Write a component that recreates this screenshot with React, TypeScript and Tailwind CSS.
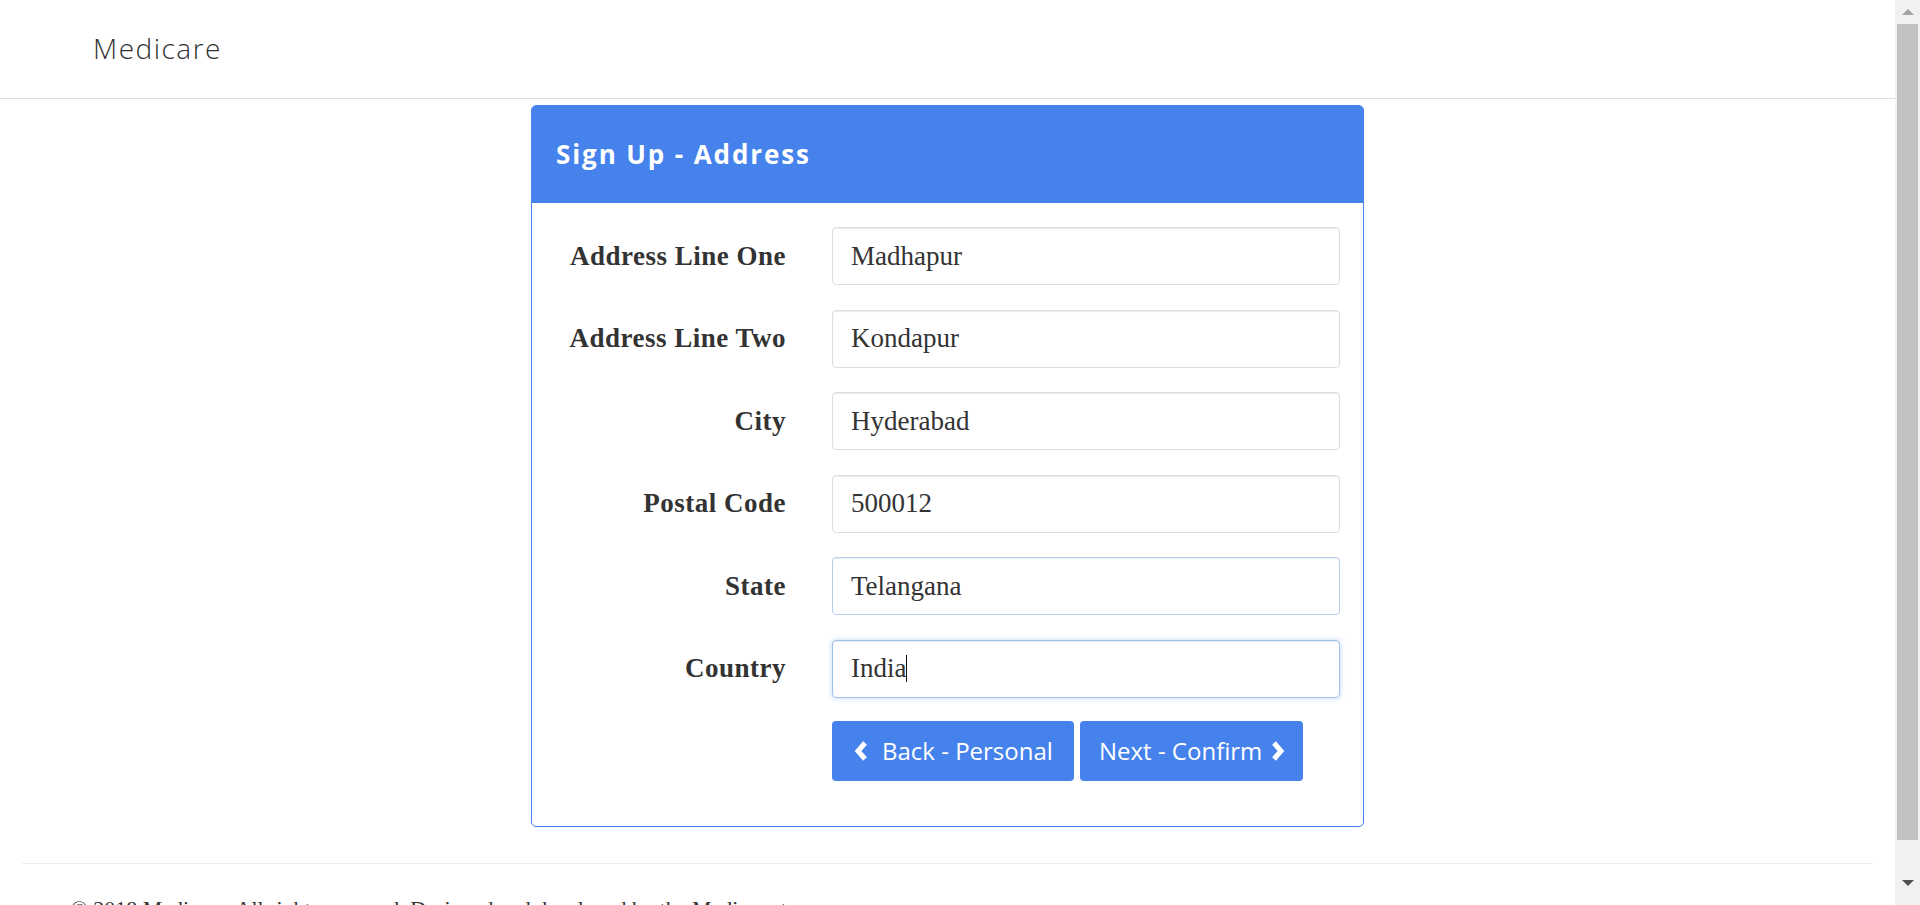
import { useState } from 'react';

const fields = [
  { label: 'Address Line One', value: 'Madhapur' },
  { label: 'Address Line Two', value: 'Kondapur' },
  { label: 'City', value: 'Hyderabad' },
  { label: 'Postal Code', value: '500012' },
  { label: 'State', value: 'Telangana' },
];

function ChevronLeft() {
  return (
    <svg width="16" height="22" viewBox="0 0 16 22">
      <polyline points="12,3 5,11 12,19" fill="none" stroke="#fff" strokeWidth="5" strokeLinejoin="miter" />
    </svg>
  );
}

function ChevronRight() {
  return (
    <svg width="16" height="22" viewBox="0 0 16 22">
      <polyline points="4,3 11,11 4,19" fill="none" stroke="#fff" strokeWidth="5" strokeLinejoin="miter" />
    </svg>
  );
}

// window scrollbar as it appears in the screenshot
function Scrollbar() {
  return (
    <div className="w-[25px] h-[905px] shrink-0 bg-[#f1f1f1] flex flex-col items-center">
      <div className="h-[24px] flex items-center justify-center">
        <svg width="12" height="6" viewBox="0 0 12 6">
          <polygon points="0,6 6,0 12,6" fill="#a3a3a3" />
        </svg>
      </div>
      <div className="w-[21px] h-[816px] bg-[#c1c1c1]"></div>
      <div className="flex-1 flex items-center justify-center pt-[20px]">
        <svg width="12" height="6" viewBox="0 0 12 6">
          <polygon points="0,0 12,0 6,6" fill="#505050" />
        </svg>
      </div>
    </div>
  );
}

function App() {
  const [address, setAddress] = useState(fields.map((f) => f.value));

  return (
    <div className="flex items-start h-[905px] overflow-hidden bg-white">
      <div className="flex-1 min-w-0 text-[#333333] font-['Liberation_Serif',serif]">
        <nav className="h-[99px] border-b border-[#dddddd] flex items-center px-[93px] pb-[3px]">
          <span className="font-['Open_Sans',sans-serif] font-light text-[28px] tracking-[1.5px] text-[#333333]">
            Medicare
          </span>
        </nav>

        <div className="flex justify-center mt-[6px]">
          <div className="w-[833px] border border-[#4582ec] rounded-[5px] overflow-hidden">
            <div className="h-[97px] bg-[#4582ec] flex items-center px-[24px]">
              <h2 className="font-['Open_Sans',sans-serif] font-bold text-[26px] tracking-[1.9px] text-white">
                Sign Up - Address
              </h2>
            </div>

            <div className="pt-[24px] pb-[45px] pl-[24px] pr-[23px] flex flex-col gap-[24.5px]">
              {fields.map((f, i) => (
                <div key={f.label} className="flex items-center gap-[46px]">
                  <label className="w-[230px] text-right font-bold text-[27px] tracking-[0.5px] leading-none">
                    {f.label}
                  </label>
                  <input
                    className={
                      i === 4
                        ? 'w-[508px] h-[58px] border border-[#b9cfec] rounded-[4px] px-[18px] text-[27px] text-[#333333] shadow-[inset_0_1px_1px_rgba(0,0,0,0.075)] outline-none'
                        : 'w-[508px] h-[58px] border border-[#dddddd] rounded-[4px] px-[18px] text-[27px] text-[#333333] shadow-[inset_0_1px_1px_rgba(0,0,0,0.075)] outline-none'
                    }
                    value={address[i]}
                    onChange={(e) => {
                      const next = [...address];
                      next[i] = e.target.value;
                      setAddress(next);
                    }}
                  />
                </div>
              ))}

              <div className="flex items-center gap-[46px]">
                <label className="w-[230px] text-right font-bold text-[27px] tracking-[0.5px] leading-none">
                  Country
                </label>
                <div className="w-[508px] h-[58px] border border-[#9fc0ea] rounded-[4px] px-[18px] text-[27px] flex items-center shadow-[inset_0_1px_1px_rgba(0,0,0,0.075),0_0_5px_rgba(69,130,236,0.35)]">
                  <span>India</span>
                  <span className="w-[1px] h-[27px] bg-[#111111]"></span>
                </div>
              </div>

              <div className="flex gap-[6px] pl-[276px] mt-[-1px]">
                <button className="h-[60px] w-[242px] bg-[#4582ec] rounded-[4px] flex items-center pl-[21px] gap-[13px] text-white font-['Open_Sans',sans-serif] text-[24px]">
                  <ChevronLeft />
                  <span>Back - Personal</span>
                </button>
                <button className="h-[60px] w-[223px] bg-[#4582ec] rounded-[4px] flex items-center pl-[19px] gap-[8px] text-white font-['Open_Sans',sans-serif] text-[24px]">
                  <span>Next - Confirm</span>
                  <ChevronRight />
                </button>
              </div>
            </div>
          </div>
        </div>

        <hr className="mt-[36px] mx-[22px] border-0 border-t border-[#eeeeee]" />
        <footer className="pt-[32px] pl-[71px] text-[22px] leading-[26px]">
          <p>© 2018 Medicare, All rights reserved. Designed and developed by the Medicare team</p>
        </footer>
      </div>
      <Scrollbar />
    </div>
  );
}

export default App;
